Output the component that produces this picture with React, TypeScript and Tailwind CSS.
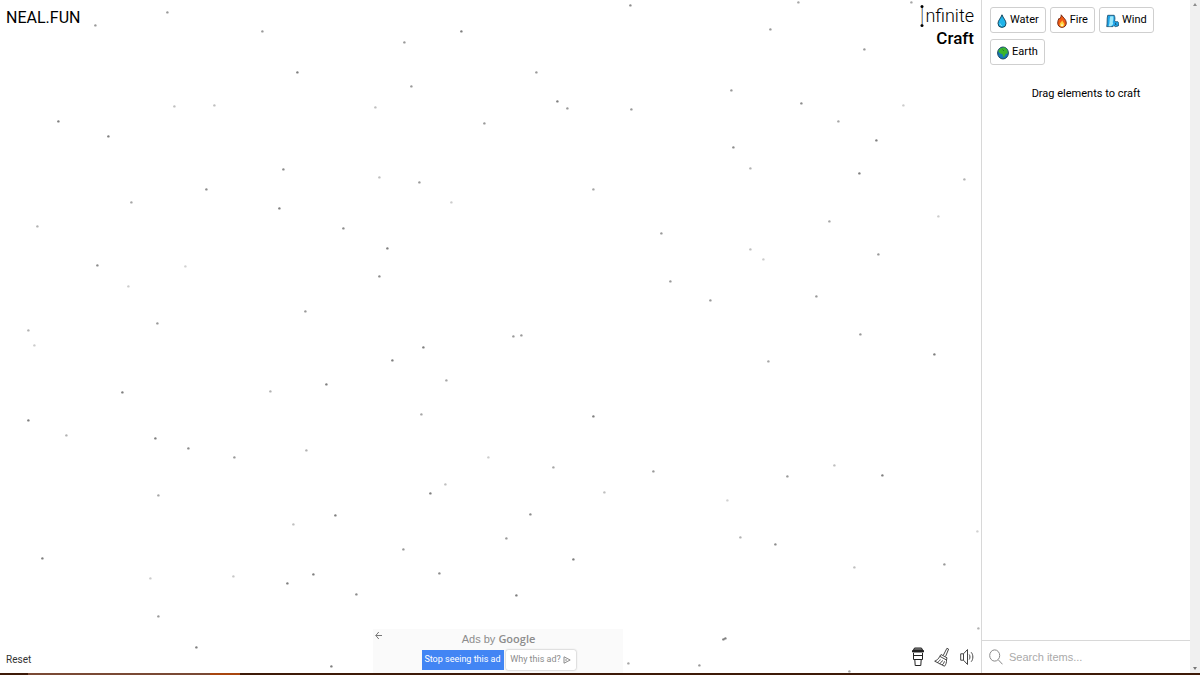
import { FormEvent, ReactNode, useState } from 'react';

type Particle = [x: number, y: number, shade: number];

// x, y, opacity
const PARTICLES: Particle[] = [
	[95, 25, 0.4], [167, 12, 0.4], [262, 31, 0.4], [461, 31, 0.5], [404, 42, 0.4], [297, 72, 0.5],
	[411, 86, 0.4], [174, 106, 0.25], [214, 105, 0.25], [375, 107, 0.25], [484, 123, 0.4], [58, 121, 0.5],
	[108, 136, 0.5], [283, 169, 0.45], [379, 177, 0.25], [419, 182, 0.4], [451, 202, 0.2], [206, 189, 0.45],
	[131, 202, 0.35], [279, 208, 0.5], [343, 228, 0.45], [37, 226, 0.3], [387, 248, 0.5], [97, 265, 0.45],
	[185, 266, 0.18], [128, 286, 0.2], [379, 276, 0.45], [305, 311, 0.4], [157, 323, 0.4], [28, 330, 0.3],
	[34, 345, 0.2], [423, 347, 0.5], [392, 360, 0.5], [326, 384, 0.5], [446, 380, 0.35], [270, 391, 0.3],
	[122, 392, 0.5], [28, 420, 0.5], [421, 414, 0.35], [66, 435, 0.3], [155, 438, 0.5], [188, 448, 0.45],
	[234, 457, 0.4], [306, 450, 0.3], [488, 457, 0.2], [445, 484, 0.25], [430, 493, 0.5], [158, 495, 0.35],
	[335, 515, 0.5], [293, 524, 0.25], [403, 549, 0.4], [42, 558, 0.5], [439, 573, 0.45], [313, 574, 0.5],
	[233, 576, 0.22], [150, 578, 0.2], [287, 583, 0.5], [356, 594, 0.45], [158, 616, 0.4], [196, 647, 0.5],
	[331, 666, 0.5], [630, 5, 0.45], [798, 2, 0.35], [770, 29, 0.4], [911, 2, 0.35], [864, 49, 0.4],
	[536, 72, 0.4], [557, 101, 0.5], [567, 108, 0.4], [631, 109, 0.4], [731, 90, 0.4], [801, 103, 0.45],
	[903, 105, 0.2], [838, 121, 0.35], [876, 140, 0.5], [733, 147, 0.45], [750, 168, 0.3], [859, 173, 0.5],
	[964, 179, 0.3], [593, 189, 0.35], [938, 216, 0.2], [829, 221, 0.35], [661, 233, 0.4], [750, 249, 0.25],
	[763, 259, 0.2], [878, 254, 0.4], [670, 281, 0.4], [816, 296, 0.4], [710, 300, 0.4], [513, 336, 0.4],
	[521, 335, 0.4], [860, 334, 0.4], [934, 354, 0.5], [768, 361, 0.35], [593, 416, 0.5], [553, 467, 0.35],
	[653, 471, 0.4], [834, 465, 0.25], [787, 476, 0.4], [882, 475, 0.5], [604, 492, 0.25], [727, 500, 0.18],
	[530, 514, 0.45], [977, 531, 0.18], [506, 538, 0.4], [740, 537, 0.3], [775, 544, 0.45], [573, 559, 0.5],
	[944, 564, 0.4], [854, 567, 0.25], [516, 595, 0.5], [723, 639, 0.5], [725, 638, 0.5], [628, 663, 0.35],
	[699, 665, 0.4], [849, 671, 0.35], [978, 628, 0.3],
];

const WaterIcon = () => (
	<svg className="shrink-0" width="10" height="14" viewBox="0 0 10 14" aria-hidden="true">
		<path d="M5 .8C4 4 1 6.4 1 9.4a4 4 0 0 0 8 0C9 6.4 6 4 5 .8Z" fill="#1fb4ea" stroke="#16455c" />
		<path d="M3 9.5c.2 1.3.8 1.9 1.8 2.1" fill="none" stroke="#9be4fb" />
	</svg>
);

const FireIcon = () => (
	<svg className="shrink-0" width="10" height="14" viewBox="0 0 10 14" aria-hidden="true">
		<path d="M4.2.8C4.500 2.800 3.400 3.500 2.700 4.900L2 4.300C1.200 5.800.7 7.300.7 9c0 2.600 1.800 4.400 4.300 4.400S9.300 11.600 9.300 9C9.300 5.500 6.500 4 4.200.8Z" fill="#f05a14" stroke="#6d2410" strokeWidth=".9" />
		<path d="M5.200 6.300C5 8 2.700 8.500 2.700 10.600c0 1.400 1 2.200 2.300 2.200s2.400-.8 2.400-2.200c0-1.600-1.700-2.300-2.200-4.300Z" fill="#ffd23c" />
		<path d="M5.100 9.500c-.3.900-1.100 1-1.100 2s2 1.200 2 0c0-.8-.7-1-.9-2Z" fill="#fff6c8" />
	</svg>
);

const WindIcon = () => (
	<svg className="shrink-0" width="13" height="14" viewBox="0 0 13 14" aria-hidden="true">
		<path d="M1.700 1.300h6.500c.8 1.500.9 3.500.5 5.300l.8 1.200 2.300-.1c1.100.7 1.200 3.300.4 4.300l-3 .6-1.200-1.100-1 1.100H.7C1.500 9.500.7 4.500 1.700 1.300Z" fill="#1ea4e8" stroke="#174766" strokeWidth=".8" />
		<path d="M4.300 2.300h2.900c.5 2.300.1 4.200-.5 5.600l.6 2-2.300 2.400H2.600c1.400-2.600.5-6.800 1.700-10Z" fill="#9be8fb" />
		<path d="M9.200 9.300c.8.300.8 1.200.2 1.700" fill="none" stroke="#12364d" />
	</svg>
);

const EarthIcon = () => (
	<svg className="shrink-0" width="12" height="14" viewBox="0 0 12 14" aria-hidden="true">
		<ellipse cx="6" cy="7" rx="5.400" ry="6" fill="#1777b8" stroke="#123c52" strokeWidth=".9" />
		<path d="M3 2.500 7.500 1.300 10.400 4l.3 3.500-1.900.2-1 2.300-1.500 1.300-.8-3-2.700-1L1.300 5.300Z" fill="#3cb52b" />
		<path d="M5.500 3.500 7 5" stroke="#1f7b31" />
	</svg>
);

const CupIcon = () => (
	<svg width="12" height="20" viewBox="0 0 12 20" fill="none" stroke="#222" aria-hidden="true">
		<path d="M2.500 1h7l1 2h-9Z" fill="#999" />
		<path d="M.5 3.500h11v1.500H.5Z" fill="#222" />
		<path d="M1.500 6v6.500h1.300l.4 6h5.600l.4-6h1.300V6" />
		<path d="M1.500 8.500h9M2.300 12.500h7.400" />
	</svg>
);

const BroomIcon = () => (
	<svg width="16" height="20" viewBox="0 0 16 20" fill="none" stroke="#333" strokeWidth=".9" aria-hidden="true">
		<path d="m9.300 8.300 3.600-7 1.700.8-3 7.300" />
		<path d="m7 7.500 6 3.300-.5 2.200-6.700-3.700Z" />
		<path d="M5.800 9.300C4.600 12 2.700 13.300.7 14.200l9.800 5c1.500-1.800 2.200-3.900 2-6.200" />
		<path d="M3.300 15.500c1.500-.8 2.400-1.800 3-3M5.700 16.700c1.300-.9 2.300-2 2.900-3.300M8.200 18c1.200-1.100 1.900-2.300 2.300-3.700" />
	</svg>
);

const SoundIcon = () => (
	<svg width="14" height="18" viewBox="0 0 14 18" fill="none" stroke="#444" aria-hidden="true">
		<path d="M.7 5.800h2.800L7.500 1.500v15l-4-4.300H.7ZM3.500 5.800v6.400" />
		<path d="M9.200 6.500c1 1.400 1 3.600 0 5M11.200 4.300c2.200 2.500 2.200 6.900 0 9.400" />
	</svg>
);

const SearchIcon = () => (
	<svg width="14" height="16" viewBox="0 0 14 16" fill="none" stroke="#888" aria-hidden="true">
		<ellipse cx="5.700" cy="6.500" rx="5" ry="5.600" />
		<path d="m9.300 10.800 4.200 4.500" />
	</svg>
);

const ITEMS: { name: string; icon: ReactNode }[] = [
	{ name: 'Water', icon: <WaterIcon /> },
	{ name: 'Fire', icon: <FireIcon /> },
	{ name: 'Wind', icon: <WindIcon /> },
	{ name: 'Earth', icon: <EarthIcon /> },
];

const Particles = () => (
	<svg className="absolute inset-0 h-full w-full pointer-events-none" aria-hidden="true">
		{PARTICLES.map(([x, y, shade]) => (
			<circle key={`${x}-${y}`} cx={x + 0.4} cy={y + 0.4} r="1.2" opacity={shade} />
		))}
	</svg>
);

const Logo = () => (
	<h1 className="flex flex-col items-end text-black">
		<span className="flex items-center text-lg leading-5 font-light">
			<span className="relative text-2xl leading-5 font-thin">
				I
				<span className="absolute left-1/2 -top-px h-[3px] w-[3px] -translate-x-1/2 rounded-full bg-black" />
				<span className="absolute left-1/2 -bottom-px h-[3px] w-[3px] -translate-x-1/2 rounded-full bg-black" />
			</span>
			nfinite
		</span>
		<span className="pt-0.5 text-[17px] leading-5 font-medium">Craft</span>
	</h1>
);

const AdPanel = () => (
	<aside className="flex h-11 w-[250px] bg-[#fafafa] text-[#8c8c8c]">
		<button type="button" aria-label="Back" className="self-start pl-0.5 pt-0.5">
			<svg width="7" height="9" viewBox="0 0 7 9" fill="none" stroke="#777" aria-hidden="true">
				<path d="M7 4.500H.8M3.800 1 .8 4.500l3 3.500" />
			</svg>
		</button>
		<div className="flex flex-1 flex-col items-center gap-px pr-2">
			<p className="font-['Liberation_Sans',sans-serif] text-[11px] leading-5">
				Ads by <span className="font-['Open_Sans',sans-serif] font-semibold">Google</span>
			</p>
			<div className="flex gap-0.5 text-[9px]">
				<button type="button" className="h-5 w-[82px] whitespace-nowrap bg-[#4285f4] text-white">
					Stop seeing this ad
				</button>
				<button type="button" className="flex h-5 w-[70px] items-center justify-center gap-0.5 whitespace-nowrap rounded-xs bg-white shadow-[0_0_2px_#999]">
					Why this ad?
					<svg className="shrink-0" width="8" height="8" viewBox="0 0 8 8" fill="none" stroke="#8c8c8c" aria-hidden="true">
						<path d="M1 .8 7.200 4 1 7.200ZM3 3v2" />
					</svg>
				</button>
			</div>
		</div>
	</aside>
);

const Sidebar = () => {
	const [query, setQuery] = useState('');
	const visible = ITEMS.filter(({ name }) => name.toLowerCase().includes(query.toLowerCase()));

	return (
		<section className="flex w-[209px] shrink-0 flex-col border-l border-[#d8d8d8] text-[11px]">
			<div className="flex flex-wrap gap-x-1 gap-y-1.5 px-2 pt-[7px]">
				{visible.map(({ name, icon }) => (
					<button
						key={name}
						type="button"
						className="flex h-[26px] items-center gap-[3px] rounded-[3px] border border-[#cfcfcf] px-1.5 pt-px text-black"
					>
						{icon}
						{name}
					</button>
				))}
			</div>
			<p className="pt-[21px] text-center text-black">Drag elements to craft</p>
			<form onSubmit={(e: FormEvent) => e.preventDefault()} className="mt-auto flex h-[33px] items-center gap-1.5 border-t border-[#d8d8d8] px-[7px]">
				<SearchIcon />
				<input
					type="text"
					value={query}
					onChange={(e) => setQuery(e.target.value)}
					aria-label="Search items"
					placeholder="Search items..."
					className="min-w-0 flex-1 bg-transparent font-['Liberation_Sans',sans-serif] outline-none placeholder:text-[#aaa]"
				/>
			</form>
		</section>
	);
};

const App: React.FC = () => {
	return (
		<div className="flex h-screen flex-col bg-white font-[Roboto,sans-serif]">
			<div className="flex min-h-0 flex-1">
				<main className="relative flex min-w-0 flex-1 flex-col justify-between">
					<Particles />
					<header className="flex items-start justify-between py-1.5 pl-1.5 pr-[7px]">
						<a href="#" className="text-base leading-6 text-black">
							NEAL.FUN
						</a>
						<Logo />
					</header>
					<footer className="grid grid-cols-[1fr_auto_1fr] items-center pl-1.5 pr-[7px]">
						<button type="button" className="justify-self-start pt-4 text-[10px] text-[#333]">
							Reset
						</button>
						<div className="pl-4">
							<AdPanel />
						</div>
						<div className="flex items-center gap-2.5 justify-self-end pt-3">
							<button type="button" aria-label="Buy a coffee"><CupIcon /></button>
							<button type="button" aria-label="Clear the board"><BroomIcon /></button>
							<button type="button" aria-label="Sound"><SoundIcon /></button>
						</div>
					</footer>
				</main>
				<Sidebar />
				<div className="flex w-2.5 shrink-0 flex-col items-center justify-between bg-[#f0f0f0] py-[3px]" aria-hidden="true">
					<svg width="4" height="3" viewBox="0 0 4 3"><path d="M0 3 2 0l2 3Z" fill="#8c8c8c" /></svg>
					<svg width="4" height="3" viewBox="0 0 4 3"><path d="M0 0h4L2 3Z" fill="#777" /></svg>
				</div>
			</div>
			<div className="flex h-0.5 shrink-0 bg-[#3d1a08]">
				<div className="ml-7 w-[182px] bg-[#7a4a35]" />
				<div className="w-[30px] bg-[#a8460f]" />
			</div>
		</div>
	);
};

export default App;
